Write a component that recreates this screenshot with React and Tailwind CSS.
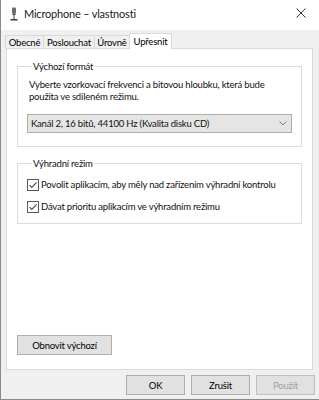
import React from "react";

function MicIcon() {
  return (
    <svg width="8" height="14" viewBox="0 0 8 14" className="shrink-0">
      <rect x="2" y="0.5" width="4" height="6" rx="1" fill="#6b6b6b" />
      <rect x="2.5" y="6.5" width="3" height="1.5" fill="#3c3c3c" />
      <rect x="3.5" y="8" width="1" height="4" fill="#4a4a4a" />
      <rect x="0.5" y="12" width="7" height="1.5" fill="#3c3c3c" />
    </svg>
  );
}

function CheckBox() {
  return (
    <span className="w-[12px] h-[12px] border border-[#5a5a5a] bg-white flex items-center justify-center shrink-0">
      <svg width="10" height="10" viewBox="0 0 10 10">
        <path d="M1.5 5.2 L3.8 7.5 L8.6 2.4" fill="none" stroke="#4a4a4a" strokeWidth="1.1" />
      </svg>
    </span>
  );
}

function Button({ children, className = "" }) {
  return (
    <div
      className={`h-[20px] flex items-center justify-center border bg-[#e1e1e1] border-[#adadad] ${className}`}
    >
      {children}
    </div>
  );
}

export default function App() {
  const tabs = [
    { t: "Obecné", w: "w-[38px]" },
    { t: "Poslouchat", w: "w-[51px]" },
    { t: "Úrovně", w: "w-[35px]" },
  ];
  return (
    <div
      className="w-[319px] h-[400px] flex flex-col bg-[#f0f0f0] border-l border-b border-[#8a8a8a] text-[9.5px] tracking-[-0.2px] text-black leading-[13px] overflow-hidden whitespace-nowrap"
      style={{ fontFamily: 'Lato, "Noto Sans", sans-serif' }}
    >
      {/* title bar */}
      <div className="h-[30px] bg-white flex items-center shrink-0">
        <div className="ml-[9px] mr-[6px] flex items-center -mt-[3px]">
          <MicIcon />
        </div>
        <span className="text-[11px] tracking-[-0.2px] text-[#1a1a1a] -mt-[3px]">Microphone – vlastnosti</span>
        <svg width="10" height="10" viewBox="0 0 10 10" className="ml-auto mr-[13px] -mt-[4px]">
          <path d="M0.5 0.5 L9.5 9.5 M9.5 0.5 L0.5 9.5" stroke="#333" strokeWidth="1" />
        </svg>
      </div>

      {/* tabs */}
      <div className="flex items-end pl-[4px] mt-[1px] h-[17px] shrink-0">
        {tabs.map(({ t, w }) => (
          <div
            key={t}
            className={`h-[13px] ${w} border border-b-0 border-r-0 border-[#d9d9d9] flex items-center justify-center`}
          >
            {t}
          </div>
        ))}
        <div className="h-[16px] w-[43px] -mb-px bg-white border border-b-0 border-[#d9d9d9] flex items-center justify-center relative z-10">
          Upřesnit
        </div>
      </div>

      {/* panel */}
      <div className="ml-[5px] w-[307px] h-[322px] bg-white border border-[#d9d9d9] flex flex-col px-[10px] shrink-0">
        <fieldset className="mt-[11px] min-w-0 border border-[#dcdcdc] h-[87px] px-[9px]">
          <legend className="ml-[5px] px-px text-[#111]">Výchozí formát</legend>
          <p className="pl-[2px] mt-[6px] leading-[12px] text-[#111]">
            Vyberte vzorkovací frekvenci a bitovou hloubku, která bude
            <br />
            použita ve sdíleném režimu.
          </p>
          <div className="mt-[11px] h-[19px] bg-[#e5e5e5] border border-[#adadad] flex items-center pl-[3px] pr-[4px]">
            <span className="text-[#111]">Kanál 2, 16 bitů, 44100 Hz (Kvalita disku CD)</span>
            <svg width="8" height="5" viewBox="0 0 8 5" className="ml-auto">
              <path d="M0.5 0.5 L4 4 L7.5 0.5" fill="none" stroke="#777" strokeWidth="1" />
            </svg>
          </div>
        </fieldset>

        <fieldset className="mt-[10px] min-w-0 border border-[#dcdcdc] h-[67px] px-[9px]">
          <legend className="ml-[5px] px-px text-[#111]">Výhradní režim</legend>
          <div className="mt-[8px] flex items-center gap-[2px]">
            <CheckBox />
            <span className="text-[#111]">Povolit aplikacím, aby měly nad zařízením výhradní kontrolu</span>
          </div>
          <div className="mt-[9px] flex items-center gap-[2px]">
            <CheckBox />
            <span className="text-[#111]">Dávat prioritu aplikacím ve výhradním režimu</span>
          </div>
        </fieldset>

        <div className="mt-auto mb-[14px]">
          <Button className="w-[95px]">Obnovit výchozí</Button>
        </div>
      </div>

      {/* bottom buttons */}
      <div className="flex justify-end gap-[6px] mt-[5px] pr-[4px]">
        <Button className="w-[59px] border-[#0078d7]">OK</Button>
        <Button className="w-[59px]">Zrušit</Button>
        <Button className="w-[59px] bg-[#cccccc] border-[#bfbfbf] text-[#a0a0a0]">Použít</Button>
      </div>
    </div>
  );
}
